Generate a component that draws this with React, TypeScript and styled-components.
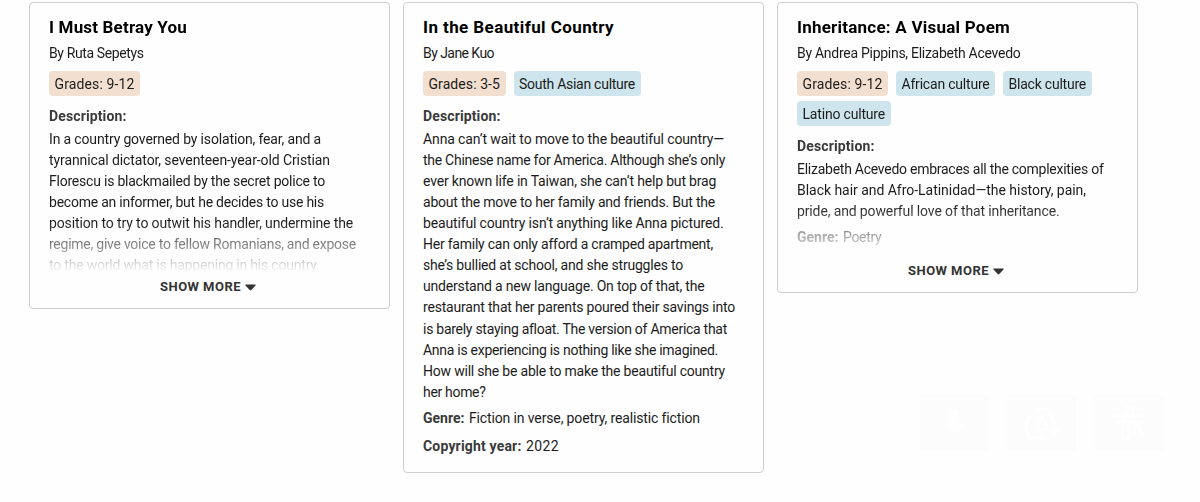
import styled, { createGlobalStyle, css } from 'styled-components';

type Line = [text: string, tracking: number];

interface Book {
  title: Line;
  author: Line;
  grades: Line;
  cultures: Line[];
  description: Line[];
  genre?: Line;
  year?: Line;
  clip?: number;
}

const books: Book[] = [
  {
    title: ['I Must Betray You', 0.182],
    author: ['By Ruta Sepetys', -0.386],
    grades: ['Grades: 9-12', 0.125],
    cultures: [],
    description: [
      ['In a country governed by isolation, fear, and a', -0.153],
      ['tyrannical dictator, seventeen-year-old Cristian', -0.095],
      ['Florescu is blackmailed by the secret police to', -0.218],
      ['become an informer, but he decides to use his', -0.234],
      ['position to try to outwit his handler, undermine the', -0.125],
      ['regime, give voice to fellow Romanians, and expose', -0.244],
      ['to the world what is happening in his country.', -0.207],
    ],
    clip: 273,
  },
  {
    title: ['In the Beautiful Country', 0.413],
    author: ['By Jane Kuo', -0.556],
    grades: ['Grades: 3-5', 0.079],
    cultures: [['South Asian culture', -0.271]],
    description: [
      ['Anna can’t wait to move to the beautiful country—', -0.119],
      ['the Chinese name for America. Although she’s only', -0.27],
      ['ever known life in Taiwan, she can’t help but brag', -0.171],
      ['about the move to her family and friends. But the', -0.214],
      ['beautiful country isn’t anything like Anna pictured.', -0.156],
      ['Her family can only afford a cramped apartment,', -0.233],
      ['she’s bullied at school, and she struggles to', -0.204],
      ['understand a new language. On top of that, the', -0.185],
      ['restaurant that her parents poured their savings into', -0.188],
      ['is barely staying afloat. The version of America that', -0.27],
      ['Anna is experiencing is nothing like she imagined.', -0.278],
      ['How will she be able to make the beautiful country', -0.205],
      ['her home?', -0.318],
    ],
    genre: ['Fiction in verse, poetry, realistic fiction', -0.13],
    year: ['2022', 0.382],
  },
  {
    title: ['Inheritance: A Visual Poem', 0.229],
    author: ['By Andrea Pippins, Elizabeth Acevedo', -0.276],
    grades: ['Grades: 9-12', 0.125],
    cultures: [
      ['African culture', -0.205],
      ['Black culture', -0.225],
      ['Latino culture', -0.187],
    ],
    description: [
      ['Elizabeth Acevedo embraces all the complexities of', -0.258],
      ['Black hair and Afro-Latinidad—the history, pain,', -0.035],
      ['pride, and powerful love of that inheritance.', -0.129],
    ],
    genre: ['Poetry', -0.287],
    clip: 257,
  },
];

const GlobalStyle = createGlobalStyle`
  * {
    box-sizing: border-box;
  }

  body {
    margin: 0;
    background: #fefefe;
    color: #1c1c1c;
    font-family: Roboto, sans-serif;
    font-size: 14px;
    line-height: 21.1px;
  }
`;

const Page = styled.main`
  position: relative;
  height: 502px;
  overflow: hidden;
`;

const CardGrid = styled.div`
  display: grid;
  grid-template-columns: repeat(3, 361px);
  gap: 13px;
  align-items: start;
  padding: 2px 0 0 29px;
`;

const Card = styled.article`
  padding: 0 19px 10px;
  border: 1px solid #cfcfcf;
  border-radius: 4px;
  background: #fefefe;
`;

const Clip = styled.div<{ $height?: number }>`
  padding-top: 12px;
  ${({ $height }) =>
    $height &&
    css`
      height: ${$height}px;
      overflow: hidden;
      mask-image: linear-gradient(to bottom, #000 calc(100% - 54px), transparent calc(100% - 3px));
    `}
`;

const Tracked = styled.span<{ $tracking: number }>`
  letter-spacing: ${({ $tracking }) => $tracking}px;
  white-space: nowrap;
`;

const Title = styled.h2`
  margin: 0;
  color: #000;
  font-size: 17px;
  font-weight: 700;
  line-height: 24px;
`;

const Author = styled.p`
  margin: 4px 0 7px;
`;

const Tags = styled.div`
  display: flex;
  flex-wrap: wrap;
  gap: 5px 8px;
  margin-bottom: 10px;
`;

const Tag = styled.span<{ $tone: 'grade' | 'culture' }>`
  height: 25px;
  padding: 0 5.5px;
  border-radius: 4px;
  background: ${({ $tone }) => ($tone === 'grade' ? '#f3dfcf' : '#cfe5ed')};
  line-height: 26px;
`;

const Label = styled.strong<{ $tracking?: number }>`
  color: #3a3a3a;
  font-weight: 700;
  letter-spacing: ${({ $tracking = 0 }) => $tracking}px;
`;

const Description = styled.p`
  margin: 1.5px 0 0;

  ${Tracked} {
    display: block;
  }
`;

const Detail = styled.p<{ $gap: number }>`
  display: flex;
  gap: 4.5px;
  margin: ${({ $gap }) => $gap}px 0 0;
`;

const ShowMore = styled.button`
  display: flex;
  align-items: center;
  justify-content: center;
  gap: 4px;
  width: 100%;
  height: 22px;
  padding: 0 3px 0 0;
  border: 0;
  background: none;
  color: #333;
  font: 700 13px/22px Roboto, sans-serif;
  letter-spacing: 0.47px;
`;

const Spacer = styled.div`
  height: 5px;
`;

const Ghosts = styled.div`
  position: absolute;
  top: 394px;
  left: 920px;
  display: flex;
  gap: 18px;
`;

const Ghost = styled.div`
  display: grid;
  place-items: center;
  width: 69px;
  height: 57px;
  border-radius: 4px;
  background: #fcfcfc;
`;

function Text({ line: [text, tracking] }: { line: Line }) {
  return <Tracked $tracking={tracking}>{text}</Tracked>;
}

function BookCard({ book }: { book: Book }) {
  return (
    <Card>
      <Clip $height={book.clip}>
        <Title><Text line={book.title} /></Title>
        <Author><Text line={book.author} /></Author>
        <Tags>
          <Tag $tone="grade"><Text line={book.grades} /></Tag>
          {book.cultures.map(culture => (
            <Tag key={culture[0]} $tone="culture"><Text line={culture} /></Tag>
          ))}
        </Tags>
        <Label $tracking={0.126}>Description:</Label>
        <Description>
          {book.description.map(line => <Text key={line[0]} line={line} />)}
        </Description>
        {book.genre && (
          <Detail $gap={5}>
            <Label>Genre:</Label>
            <Text line={book.genre} />
          </Detail>
        )}
        {book.year && (
          <Detail $gap={6.5}>
            <Label $tracking={0.175}>Copyright year:</Label>
            <Text line={book.year} />
          </Detail>
        )}
        {!book.clip && <Spacer />}
      </Clip>
      {book.clip && (
        <ShowMore>
          SHOW MORE
          <svg width="11" height="7" viewBox="0 0 11 7">
            <path d="M1 .5h9c.7 0 .9.6.5 1.1L6.3 6.1c-.5.5-1.1.5-1.6 0L.5 1.6C.1 1.1.3.5 1 .5Z" fill="#333" />
          </svg>
        </ShowMore>
      )}
    </Card>
  );
}

export default function App() {
  return (
    <Page>
      <GlobalStyle />
      <CardGrid>
        {books.map(book => <BookCard key={book.title[0]} book={book} />)}
      </CardGrid>
      <Ghosts>
        <Ghost>
          <svg width="22" height="28" viewBox="0 0 22 28" fill="#fefefe">
            <path d="M6 1h9v14h6L11 25 1 15h5Z" />
          </svg>
        </Ghost>
        <Ghost>
          <svg width="38" height="36" viewBox="0 0 38 36" fill="none" stroke="#fefefe" strokeWidth="3">
            <path d="M12 4h12l9 16M8 10 2 22l5 11h16M14 25l5-13 6 11M11 25h13M31 20v12M25 26h12" />
          </svg>
        </Ghost>
        <Ghost>
          <svg width="40" height="38" viewBox="0 0 40 38" fill="none" stroke="#fefefe" strokeWidth="3">
            <path d="M3 12h32M8 18h28M14 12v23h6V18M18 12V3h6v12M24 32l4-12 6 12" />
          </svg>
        </Ghost>
      </Ghosts>
    </Page>
  );
}
